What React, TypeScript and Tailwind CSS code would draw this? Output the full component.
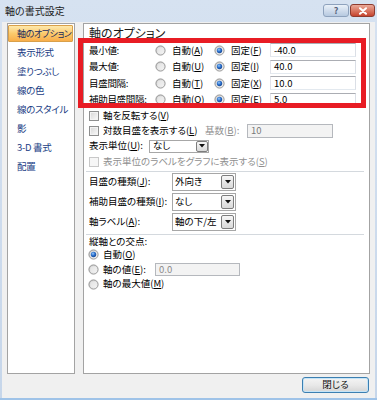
import React from "react";

function Radio({ on, className }: { on?: boolean; className?: string }) {
  return (
    <svg width="11" height="11" viewBox="0 0 11 11" className={"shrink-0 " + (className ?? "")}>
      <defs>
        <linearGradient id="rOuter" x1="0" y1="0" x2="1" y2="1">
          <stop offset="0" stopColor="#c4c4c4" />
          <stop offset="1" stopColor="#f9f9f9" />
        </linearGradient>
        <radialGradient id="rDot" cx="0.4" cy="0.35" r="0.75">
          <stop offset="0" stopColor="#9bcaf7" />
          <stop offset="0.45" stopColor="#2f74d0" />
          <stop offset="1" stopColor="#0f3b82" />
        </radialGradient>
      </defs>
      <circle cx="5.5" cy="5.5" r="4.6" fill="url(#rOuter)" stroke="#8d8d8d" strokeWidth="0.9" />
      <circle cx="5.5" cy="5.5" r="3.3" fill="#f4f4f4" opacity="0.55" />
      {on && <circle cx="5.5" cy="5.5" r="2.7" fill="url(#rDot)" />}
    </svg>
  );
}

function Check({ disabled }: { disabled?: boolean }) {
  return disabled ? (
    <div className="w-[10px] h-[10px] shrink-0 border border-[#c8c8c8] bg-[#f6f6f6]" />
  ) : (
    <div className="w-[10px] h-[10px] shrink-0 border border-[#8e8f8f] bg-gradient-to-br from-[#d6d6d6] to-[#fbfbfb] shadow-[inset_0_0_0_1px_#f3f3f3]" />
  );
}

function Arrow() {
  return (
    <svg width="6" height="4" viewBox="0 0 6 4">
      <path d="M0 0 H6 L3 3.5 Z" fill="#111" />
    </svg>
  );
}

function U({ c }: { c: string }) {
  return <span className="underline underline-offset-1">{c}</span>;
}

function TextBox({ v }: { v: string }) {
  return (
    <div className="w-[86px] h-[14px] shrink-0 border border-[#abadb3] border-l-[#e2e3ea] border-r-[#dbdfe6] border-b-[#e3e9ef] bg-white flex items-center pl-[3px] text-[9.5px] text-black">
      {v}
    </div>
  );
}

const topRows: { label: string; a: string; f: string; v: string }[] = [
  { label: "最小値:", a: "A", f: "F", v: "-40.0" },
  { label: "最大値:", a: "U", f: "I", v: "40.0" },
  { label: "目盛間隔:", a: "T", f: "X", v: "10.0" },
  { label: "補助目盛間隔:", a: "O", f: "E", v: "5.0" },
];

const leftItems = ["軸のオプション", "表示形式", "塗りつぶし", "線の色", "線のスタイル", "影", "3-D 書式", "配置"];

function BigSelect({ text }: { text: string }) {
  return (
    <div className="w-[64px] h-[18px] shrink-0 border border-[#a7a7a7] bg-white flex items-center pl-[2px]">
      <span className="flex-1">{text}</span>
      <div className="w-[13px] h-[14px] mr-[1px] border border-[#7d7d7d] rounded-[2px] bg-gradient-to-b from-[#f7f7f7] to-[#d9d9d9] flex items-center justify-center">
        <Arrow />
      </div>
    </div>
  );
}

export default function App() {
  return (
    <div className="relative w-[377px] h-[400px] flex flex-col bg-gradient-to-b from-[#d6e2f1] to-[#c6d6ea] font-['Noto_Sans_CJK_JP',sans-serif] [font-feature-settings:'palt'] text-[9.5px] leading-none text-black whitespace-nowrap overflow-hidden">
      {/* title bar */}
      <div className="h-[22px] shrink-0 flex pl-[5px] pr-[2px]">
        <div className="self-center text-[10px] text-[#1b1b1b]">軸の書式設定</div>
        <div className="ml-auto mt-[4px] flex gap-[1px] h-[13px]">
          <div className="w-[26px] h-[13px] rounded-[3px] border border-[#8ea2bd] bg-gradient-to-b from-[#eaf1f9] to-[#b7c9e0] flex items-center justify-center text-[9px] font-bold text-[#56637a]">
            ?
          </div>
          <div className="w-[25px] h-[13px] rounded-[3px] border border-[#8d3b2f] bg-gradient-to-b from-[#eaa999] to-[#c5432e] flex items-center justify-center">
            <svg width="10" height="8" viewBox="0 0 10 8">
              <path d="M2 1.2 L8 6.8 M8 1.2 L2 6.8" stroke="#ffffff" strokeWidth="2" strokeLinecap="round" />
            </svg>
          </div>
        </div>
      </div>

      {/* body */}
      <div className="flex-1 mx-[2px] bg-[#f0f0f0] flex flex-col px-[5px] pt-[1px]">
        <div className="h-[351px] flex gap-[8px]">
          {/* left list */}
          <div className="w-[68px] shrink-0 border border-[#a3a3a3] bg-white flex flex-col overflow-hidden">
            {leftItems.map((t, i) =>
              i === 0 ? (
                <div key={t} className="h-[19px] py-[1px] pr-[1px]">
                  <div className="h-[17px] border border-[#d9a04a] rounded-[1px] bg-gradient-to-b from-[#fde9ad] via-[#fbca6c] to-[#f8ae4a] flex items-center pl-[8px] text-[#1c2b5c] text-[9px] tracking-[-0.4px]">
                    {t}
                  </div>
                </div>
              ) : (
                <div key={t} className="h-[19px] flex items-center pl-[9px] text-[#213d84] tracking-[-0.3px]">
                  {t}
                </div>
              )
            )}
          </div>

          {/* right panel */}
          <div className="flex-1 border border-[#a3a3a3] bg-white flex flex-col pl-[5px] pr-[4px]">
            <div className="h-[18px] flex items-center text-[12px] text-[#1a1a1a]">軸のオプション</div>
            {topRows.map((r) => (
              <div key={r.label} className="h-[16.5px] flex items-center">
                <div className="w-[66px] shrink-0 tracking-[-0.3px]">{r.label}</div>
                <div className="w-[59px] shrink-0 flex items-center gap-[6px]">
                  <Radio />
                  <span>
                    自動(<U c={r.a} />)
                  </span>
                </div>
                <div className="w-[56px] shrink-0 flex items-center gap-[6px]">
                  <Radio on />
                  <span>
                    固定(<U c={r.f} />)
                  </span>
                </div>
                <TextBox v={r.v} />
              </div>
            ))}

            <div className="h-[15px] flex items-center gap-[4px]">
              <Check />
              <span>
                軸を反転する(<U c="V" />)
              </span>
            </div>
            <div className="h-[15px] flex items-center">
              <div className="w-[116px] shrink-0 flex items-center gap-[4px]">
                <Check />
                <span>
                  対数目盛を表示する(<U c="L" />)
                </span>
              </div>
              <div className="w-[42px] shrink-0 text-[#8f8f8f]">
                基数(<U c="B" />):
              </div>
              <div className="w-[86px] h-[14px] shrink-0 border border-[#b5b8bd] bg-[#f3f3f3] flex items-center pl-[3px] text-[#7a7a7a]">
                10
              </div>
            </div>
            <div className="h-[16px] flex items-center">
              <div className="w-[60px] shrink-0">
                表示単位(<U c="U" />):
              </div>
              <div className="w-[60px] h-[13px] shrink-0 border border-[#a7a7a7] bg-white flex items-center pl-[3px]">
                <span className="flex-1">なし</span>
                <div className="w-[12px] h-[11px] border border-[#7d7d7d] rounded-[2px] bg-gradient-to-b from-[#f7f7f7] to-[#d9d9d9] flex items-center justify-center">
                  <Arrow />
                </div>
              </div>
            </div>
            <div className="h-[16px] flex items-center gap-[4px]">
              <Check disabled />
              <span className="text-[#8f8f8f]">
                表示単位のラベルをグラフに表示する(<U c="S" />)
              </span>
            </div>

            <div className="mt-[1px] h-[1px] ml-[-3px] mr-[1px] bg-[#d4d9de]" />

            <div className="h-[20px] flex items-center">
              <div className="w-[83px] shrink-0">
                目盛の種類(<U c="J" />):
              </div>
              <BigSelect text="外向き" />
            </div>
            <div className="h-[20px] flex items-center">
              <div className="w-[83px] shrink-0">
                補助目盛の種類(<U c="I" />):
              </div>
              <BigSelect text="なし" />
            </div>
            <div className="h-[20px] flex items-center">
              <div className="w-[83px] shrink-0">
                軸ラベル(<U c="A" />):
              </div>
              <BigSelect text="軸の下/左" />
            </div>

            <div className="mt-[2px] h-[1px] ml-[-3px] mr-[1px] bg-[#d4d9de]" />

            <div className="h-[13px] flex items-center">縦軸との交点:</div>
            <div className="h-[13px] flex items-center gap-[4px] ml-[-1px]">
              <Radio on />
              <span>
                自動(<U c="O" />)
              </span>
            </div>
            <div className="h-[17px] flex items-center ml-[-1px]">
              <div className="w-[67px] shrink-0 flex items-center gap-[4px]">
                <Radio />
                <span>
                  軸の値(<U c="E" />):
                </span>
              </div>
              <div className="w-[85px] h-[13px] shrink-0 border border-[#b5b8bd] bg-[#f3f3f3] flex items-center pl-[3px] text-[#8a8a8a]">
                0.0
              </div>
            </div>
            <div className="h-[12px] flex items-center gap-[4px] ml-[-1px]">
              <Radio />
              <span>
                軸の最大値(<U c="M" />)
              </span>
            </div>
          </div>
        </div>

        {/* button row */}
        <div className="flex justify-end mt-[3px] mr-[1px]">
          <div className="w-[67px] h-[16px] rounded-[3px] border border-[#3c7fb1] bg-gradient-to-b from-[#f4f4f4] via-[#e9e9e9] to-[#d5d5d5] shadow-[inset_0_0_0_1px_#c5e4f7] flex items-center justify-center text-[#111]">
            閉じる
          </div>
        </div>
      </div>
      <div className="h-[2px] shrink-0 bg-[#9fc3e8]" />

      {/* red annotation frame */}
      <div className="absolute left-[78px] top-[38px] w-[288px] h-[70px] border-[5px] border-[#e81c24] pointer-events-none" />
    </div>
  );
}
